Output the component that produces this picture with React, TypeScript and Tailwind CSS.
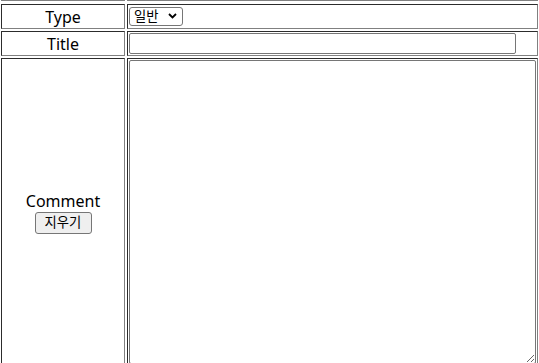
import { useState } from "react";

const labelCell =
  "w-[124px] border border-t-[#2c2c2c] border-l-[#2c2c2c] border-r-[#808080] border-b-[#808080] flex items-center justify-center text-base text-black";
const fieldCell =
  "w-[411px] border border-t-[#2c2c2c] border-l-[#2c2c2c] border-r-[#808080] border-b-[#808080] p-px flex items-center";

export default function App() {
  const [type, setType] = useState("일반");
  const [title, setTitle] = useState("");
  const [comment, setComment] = useState("");

  return (
    <div className="w-[539px] h-[363px] overflow-hidden bg-white font-['Noto_Sans','Noto_Sans_CJK_KR',sans-serif]">
      <div className="flex flex-col pl-px">
        {/* bottom edge of the row above, scrolled out of view */}
        <div className="flex gap-[2px] mb-[3px]">
          <div className="w-[124px] h-px bg-[#808080]" />
          <div className="w-[411px] h-px bg-[#808080]" />
        </div>

        <div className="flex flex-col gap-[2px]">
          <div className="flex gap-[2px]">
            <div className={`${labelCell} h-[25px]`}>Type</div>
            <div className={`${fieldCell} h-[25px]`}>
              <div className="relative flex">
                <select
                  value={type}
                  onChange={(e) => setType(e.target.value)}
                  className="appearance-none w-[54px] h-[19px] border border-[#767676] rounded-[3px] bg-white pl-[4px] text-[13.33px] leading-[17px] text-black"
                >
                  <option>일반</option>
                  <option>공지</option>
                </select>
                <svg
                  className="absolute left-[39px] top-[6px] pointer-events-none"
                  width="9"
                  height="6"
                  viewBox="0 0 9 6"
                >
                  <path d="M1 1 L4.5 4.5 L8 1" fill="none" stroke="#000" strokeWidth="1.8" />
                </svg>
              </div>
            </div>
          </div>

          <div className="flex gap-[2px]">
            <div className={`${labelCell} h-[25px]`}>Title</div>
            <div className={`${fieldCell} h-[25px]`}>
              <input
                type="text"
                value={title}
                onChange={(e) => setTitle(e.target.value)}
                className="w-[387px] h-[21px] border border-[#767676] rounded-[2px] bg-white px-[2px] text-[13.33px]"
              />
            </div>
          </div>

          <div className="flex gap-[2px]">
            <div className={`${labelCell} flex-col`}>
              <span className="leading-[22px]">Comment</span>
              <button
                type="button"
                onClick={() => setComment("")}
                className="w-[57px] h-[22px] border border-[#767676] rounded-[3px] bg-[#efefef] text-[13.33px] text-black"
              >
                지우기
              </button>
            </div>
            <div className={fieldCell}>
              <textarea
                value={comment}
                onChange={(e) => setComment(e.target.value)}
                className="w-[407px] h-[304px] border border-[#767676] rounded-[2px] bg-white p-[2px] text-[13.33px]"
              />
            </div>
          </div>
        </div>
      </div>
    </div>
  );
}
